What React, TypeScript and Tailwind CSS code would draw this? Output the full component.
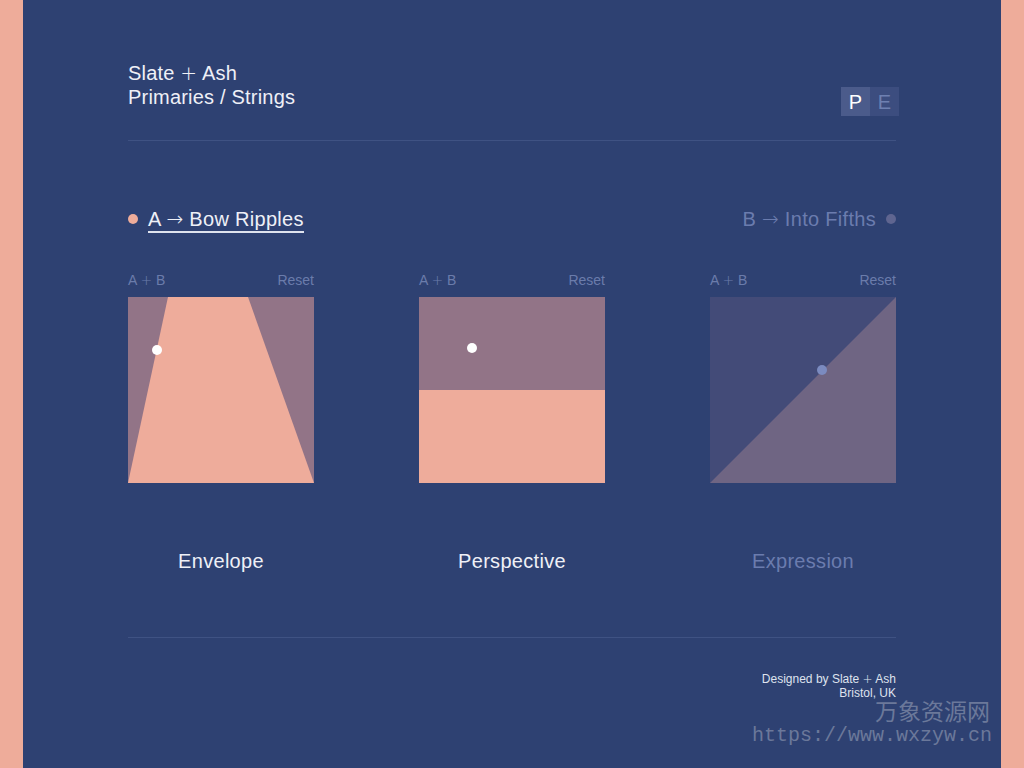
// Primaries / Strings — three XY pads with A/B morph tabs.

const PADS = [
  { title: "Envelope", active: true },
  { title: "Perspective", active: true },
  { title: "Expression", active: false },
];

const Arrow = () => (
  <span style={{ fontFamily: '"DejaVu Sans", sans-serif' }} className="text-[20px] font-extralight">
    →
  </span>
);

const Plus = () => (
  <span style={{ fontFamily: '"DejaVu Sans", sans-serif' }} className="font-light">
    +
  </span>
);

function PadShape({ index }: { index: number }) {
  if (index === 0) {
    return (
      <svg viewBox="0 0 186 186" className="block w-[186px] h-[186px]">
        <rect width="186" height="186" fill="#927487" />
        <polygon points="40,0 120,0 186,186 0,186" fill="#eeac9b" />
        <circle cx="29" cy="53" r="5" fill="#ffffff" />
      </svg>
    );
  }
  if (index === 1) {
    return (
      <svg viewBox="0 0 186 186" className="block w-[186px] h-[186px]">
        <rect width="186" height="93" fill="#927487" />
        <rect y="93" width="186" height="93" fill="#eeac9b" />
        <circle cx="53" cy="51" r="5" fill="#ffffff" />
      </svg>
    );
  }
  return (
    <svg viewBox="0 0 186 186" className="block w-[186px] h-[186px]">
      <rect width="186" height="186" fill="#434b78" />
      <polygon points="186,0 186,186 0,186" fill="#6f6583" />
      <circle cx="112" cy="73" r="5" fill="#7b8bc0" />
    </svg>
  );
}

export default function App() {
  return (
    <div
      className="relative flex w-[1024px] h-[768px] overflow-hidden bg-[#2e4172]"
      style={{ fontFamily: '"Liberation Sans", Arial, sans-serif' }}
    >
      <div className="w-[23px] shrink-0 bg-[#eeac9a]" />

      <main className="flex-1 px-[105px] pt-[61px]">
        {/* header */}
        <header className="flex justify-between items-start h-[79px]">
          <div className="text-[20px] leading-[24px] tracking-[0.2px] text-[#eef0f7]">
            <div>
              Slate <Plus /> Ash
            </div>
            <div>Primaries / Strings</div>
          </div>
          <div className="flex mt-[26px] -mr-[3px]">
            <span className="w-[29px] h-[29px] flex items-center justify-center bg-[#4b5b8b] text-[20px] text-white">
              P
            </span>
            <span className="w-[29px] h-[29px] flex items-center justify-center bg-[#3c4d7f] text-[20px] text-[#6e80b1]">
              E
            </span>
          </div>
        </header>
        <div className="h-px bg-[#3f5283]" />

        {/* A / B tabs */}
        <div className="flex justify-between items-center mt-[66px] h-[24px]">
          <div className="flex items-center gap-[10px]">
            <span className="w-[10px] h-[10px] rounded-full bg-[#eeac9a]" />
            <span className="text-[20px] leading-[24px] tracking-[0.3px] text-[#eef0f7] border-b-2 border-[#dfe3ee] translate-y-[1px]">
              A <Arrow /> Bow Ripples
            </span>
          </div>
          <div className="flex items-center gap-[10px]">
            <span className="text-[20px] leading-[24px] tracking-[0.3px] text-[#6b7cae]">
              B <Arrow /> Into Fifths
            </span>
            <span className="w-[10px] h-[10px] rounded-full bg-[#5f6590]" />
          </div>
        </div>

        {/* pads */}
        <div className="flex justify-between mt-[41px]">
          {PADS.map((p, i) => (
            <div key={p.title} className="w-[186px] flex flex-col">
              <div className="flex justify-between text-[14px] leading-[17px] text-[#6b7cab]">
                <span>
                  A <Plus /> B
                </span>
                <span>Reset</span>
              </div>
              <div className="mt-[8px]">
                <PadShape index={i} />
              </div>
              <div
                className={
                  "mt-[66px] text-center text-[20px] leading-[24px] tracking-[0.3px] " +
                  (p.active ? "text-[#eef0f7]" : "text-[#6b7cae]")
                }
              >
                {p.title}
              </div>
            </div>
          ))}
        </div>

        <div className="h-px bg-[#3f5283] mt-[64px]" />

        {/* footer */}
        <footer className="mt-[34px] text-right text-[12px] leading-[14px] text-[#dfe3ee]">
          <div>
            Designed by Slate <Plus /> Ash
          </div>
          <div>Bristol, UK</div>
        </footer>
      </main>

      <div className="w-[23px] shrink-0 bg-[#eeac9a]" />

      {/* watermark overlay */}
      <div className="absolute right-[32px] top-[697px] text-right text-[#8590ab] opacity-70 pointer-events-none">
        <div
          className="text-[23px] leading-[27px] pr-[2px]"
          style={{ fontFamily: '"Noto Sans CJK SC", sans-serif' }}
        >
          万象资源网
        </div>
        <div
          className="text-[20px] leading-[24px]"
          style={{ fontFamily: '"Liberation Mono", monospace' }}
        >
          https://www.wxzyw.cn
        </div>
      </div>
    </div>
  );
}
